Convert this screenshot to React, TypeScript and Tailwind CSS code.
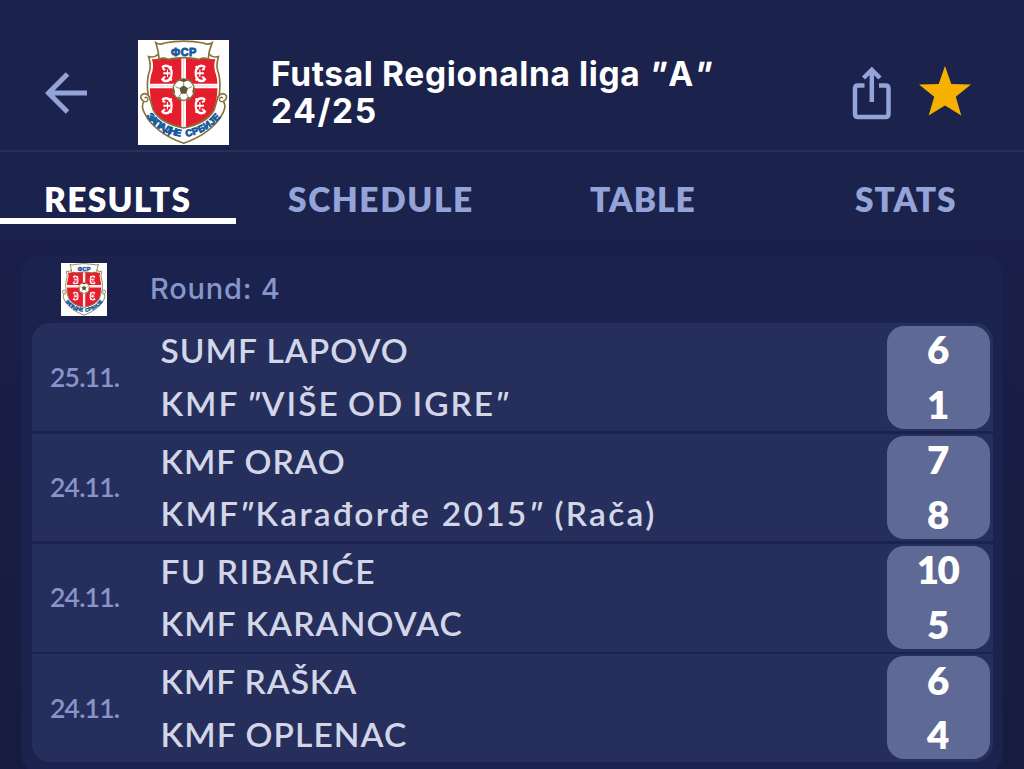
import React from 'react';

type Team = { name: React.ReactNode; tracking: string };
type Match = { date: string; home: Team; away: Team; score: [string, string] };

const quote = <span className="inline-block -skew-x-12">"</span>;

const matches: Match[] = [
  {
    date: '25.11.',
    home: { name: 'SUMF LAPOVO', tracking: 'tracking-[1px]' },
    away: { name: <>KMF {quote}VIŠE OD IGRE{quote}</>, tracking: 'tracking-[1.95px] [word-spacing:-2px]' },
    score: ['6', '1'],
  },
  {
    date: '24.11.',
    home: { name: 'KMF ORAO', tracking: 'tracking-[0.9px]' },
    away: { name: <>KMF{quote}Karađorđe 2015{quote} (Rača)</>, tracking: 'tracking-[2.3px]' },
    score: ['7', '8'],
  },
  {
    date: '24.11.',
    home: { name: 'FU RIBARIĆE', tracking: 'tracking-[1.4px]' },
    away: { name: 'KMF KARANOVAC', tracking: 'tracking-[1.1px]' },
    score: ['10', '5'],
  },
  {
    date: '24.11.',
    home: { name: 'KMF RAŠKA', tracking: 'tracking-[0.9px]' },
    away: { name: 'KMF OPLENAC', tracking: 'tracking-[1.1px]' },
    score: ['6', '4'],
  },
];

function Ocilo({ x, y, flip }: { x: number; y: number; flip?: boolean }) {
  return (
    <g transform={`translate(${x} ${y}) scale(${flip ? -1.15 : 1.15} 1.25)`} fill="none" stroke="#fff">
      <path d="M13 -14 C8 -19 -3 -20 -8 -13 C-13 -8 -13 8 -8 13 C-3 20 9 20 14 13" strokeWidth="6" />
      <path d="M-12 -17 L-5 -10 M-12 17 L-5 10 M-8 0 H10 M5 -8 L12 -12 M5 8 L13 14" strokeWidth="5" />
      <path d="M-1 -9 V9" strokeWidth="3" />
    </g>
  );
}

function Crest({ className, id }: { className: string; id: string }) {
  return (
    <svg viewBox="24 18 275 315" preserveAspectRatio="none" className={className}>
      <rect x="24" y="18" width="275" height="315" fill="#fff" />
      <path d="M56 68 Q74 72 86 60 Q160 46 238 60 Q250 72 267 68 Q258 96 268 120 C276 150 270 205 254 240 Q228 285 162 326 Q96 285 70 240 C54 205 48 150 56 120 Q66 96 56 68 Z" fill="#fff" stroke="#86743a" strokeWidth="5" />
      <path d="M66 75 Q84 78 92 68 L232 68 Q240 78 258 75 Q250 98 260 122 C268 150 264 206 250 240 Q222 272 162 290 Q102 272 74 240 C60 206 56 150 64 122 Q74 98 66 75 Z" fill="#e51e2e" />
      <path d="M162 60 V290 M58 156 H266" stroke="#fff" strokeWidth="14" />
      <path d="M162 70 V284 M62 156 H262" stroke="#f4aeb0" strokeWidth="2" />
      <Ocilo x={112} y={118} flip />
      <Ocilo x={212} y={118} />
      <Ocilo x={112} y={215} flip />
      <Ocilo x={212} y={215} />
      <circle cx="162" cy="167" r="32" fill="#fff" stroke="#86743a" strokeWidth="4" />
      <path d="M162 154 L175 163 L170 179 H154 L149 163 Z M148 139 L162 145 L176 139 L162 135 Z M132 158 L136 173 L133 180 L130 166 Z M192 158 L188 173 L191 180 L194 166 Z M142 190 L152 190 L155 197 Z M182 190 L172 190 L169 197 Z" fill="#5f5838" />
      <path d="M162 154 V145 M175 163 L187 158 M170 179 L178 190 M154 179 L146 190 M149 163 L137 158" stroke="#86743a" strokeWidth="2.5" />
      <path d="M78 26 Q90 34 104 27 Q162 16 222 27 Q234 34 248 26 Q238 50 236 76 Q222 68 210 76 Q162 66 114 76 Q100 68 88 76 Q86 50 78 26 Z" fill="#fff" stroke="#86743a" strokeWidth="5" />
      <path d="M42 202 Q26 192 36 182 Q48 174 58 188 L70 228 Q92 268 162 282 Q232 268 254 228 L266 188 Q276 174 288 182 Q298 192 282 202 Q292 216 280 238 Q250 296 162 328 Q74 296 44 238 Q32 216 42 202 Z" fill="#fff" stroke="#86743a" strokeWidth="5" />
      <path d="M42 202 Q54 206 54 194 Q48 186 44 193 M282 202 Q270 206 270 194 Q276 186 280 193" fill="none" stroke="#86743a" strokeWidth="4" />
      <path id={`${id}-left`} d="M49 246 Q84 296 156 308" fill="none" />
      <path id={`${id}-right`} d="M170 309 Q238 296 277 245" fill="none" />
      <g className="font-['Liberation_Sans'] font-bold" fill="#16589d" stroke="#16589d" strokeWidth="2.5">
        <text x="124" y="65" fontSize="33" textLength="76">ФСР</text>
        <text fontSize="29">
          <textPath href={`#${id}-left`} textLength="124">ЗАПАДНЕ</textPath>
        </text>
        <text fontSize="29">
          <textPath href={`#${id}-right`} textLength="122">СРБИЈЕ</textPath>
        </text>
      </g>
    </svg>
  );
}

function BackIcon() {
  return (
    <svg viewBox="0 0 42 42" className="h-[42px] w-[42px]" fill="none" stroke="#94a3d8" strokeWidth="5">
      <path d="M22.5 2 L3.5 21 L22.5 40 M3.5 21 H42" />
    </svg>
  );
}

function ShareIcon() {
  return (
    <svg viewBox="0 0 40 54" className="h-[54px] w-[40px]" fill="none" stroke="#94a3d8" strokeWidth="4.5">
      <path d="M12.5 19.5 H6 Q3 19.5 3 22.5 V48 Q3 51 6 51 H33.5 Q36.5 51 36.5 48 V22.5 Q36.5 19.5 33.5 19.5 H27" />
      <path d="M19.8 36 V6" />
      <path d="M11.5 12 L19.8 4 L28 12" />
      <path d="M19.8 1 L26 8.5 H13.6 Z" fill="#94a3d8" stroke="none" />
    </svg>
  );
}

function StarIcon() {
  return (
    <svg viewBox="0 0 52 50" className="h-[50px] w-[52px]" fill="#f5b000">
      <path d="M26 0 L32.3 18 L52 18.6 L36.8 30.8 L42.3 49.5 L26 39.5 L9.7 49.5 L15.2 30.8 L0 18.6 L19.7 18 Z" />
    </svg>
  );
}

export default function App() {
  return (
    <div className="flex h-[769px] w-[1024px] flex-col overflow-hidden bg-[#1b224c] font-['Lato',sans-serif]">
      <header className="flex h-[152px] shrink-0 items-start border-b-2 border-[#282f5b] pt-10 pl-[45px]">
        <button className="mt-[32px]"><BackIcon /></button>
        <Crest id="header" className="ml-[51px] h-[105px] w-[91px]" />
        <h1 className="mt-[16px] ml-[42px] w-[581px] font-['Inter',sans-serif] text-[33.5px] leading-[37px] font-bold text-white">
          <span className="block tracking-[0.64px]">Futsal Regionalna liga {quote}A{quote}</span>
          <span className="block tracking-[1.6px]">24/25</span>
        </h1>
        <button className="mt-[26px]"><ShareIcon /></button>
        <button className="mt-[26px] ml-[27px]"><StarIcon /></button>
      </header>

      <nav className="flex h-[89px] shrink-0 text-[33.5px] leading-[40px] font-extrabold text-[#94a3d8]">
        <button className="mt-[27px] h-[45px] w-[236px] border-b-[6px] border-white pl-[44px] text-left leading-[41px] tracking-[1.25px] text-white">RESULTS</button>
        <button className="mt-[27px] ml-[52px] h-[40px] w-[300px] text-left tracking-[1.6px]">SCHEDULE</button>
        <button className="mt-[27px] ml-[2px] h-[40px] w-[265px] text-left tracking-[0.9px]">TABLE</button>
        <button className="mt-[27px] h-[40px] text-left tracking-[0.9px]">STATS</button>
      </nav>

      <main className="flex-1 bg-linear-to-b from-[#191f48] to-[#161b3f] px-[21px] pt-[14px]">
        <section className="h-[519px] w-[982px] rounded-[20px] bg-[#1b224d] pl-[10.5px]">
          <div className="flex h-[68.3px] items-start pl-[29.5px]">
            <Crest id="round" className="mt-2 h-[53px] w-[46px]" />
            <span className="mt-[16px] ml-[43px] font-['Inter',sans-serif] text-[29px] leading-[36px] font-medium tracking-[0.8px] text-[#8696cb]">Round: 4</span>
          </div>
          <div className="flex w-[961px] flex-col gap-[2.6px] overflow-hidden rounded-[18px]">
            {matches.map((m, i) => (
              <div key={i} className="flex h-[107.7px] shrink-0 items-center bg-[#262f5b] pr-[2.5px] pl-[18.5px]">
                <span className="w-[110.5px] pt-[1px] text-[26.5px] font-semibold tracking-[-0.8px] text-[#8696cb]">{m.date}</span>
                <div className="w-[726.5px] pb-[0.5px] text-[33.5px] leading-[52.6px] font-semibold whitespace-nowrap text-[#d3d6e8]">
                  <div className={m.home.tracking}>{m.home.name}</div>
                  <div className={m.away.tracking}>{m.away.name}</div>
                </div>
                <div className="flex h-[103px] w-[103px] flex-col items-center justify-center rounded-[17px] bg-[#5f6995] pr-[2px] pb-[1px] text-[38.5px] leading-[54.8px] font-extrabold tracking-[-1.5px] text-white">
                  <span>{m.score[0]}</span>
                  <span>{m.score[1]}</span>
                </div>
              </div>
            ))}
          </div>
        </section>
      </main>
    </div>
  );
}
